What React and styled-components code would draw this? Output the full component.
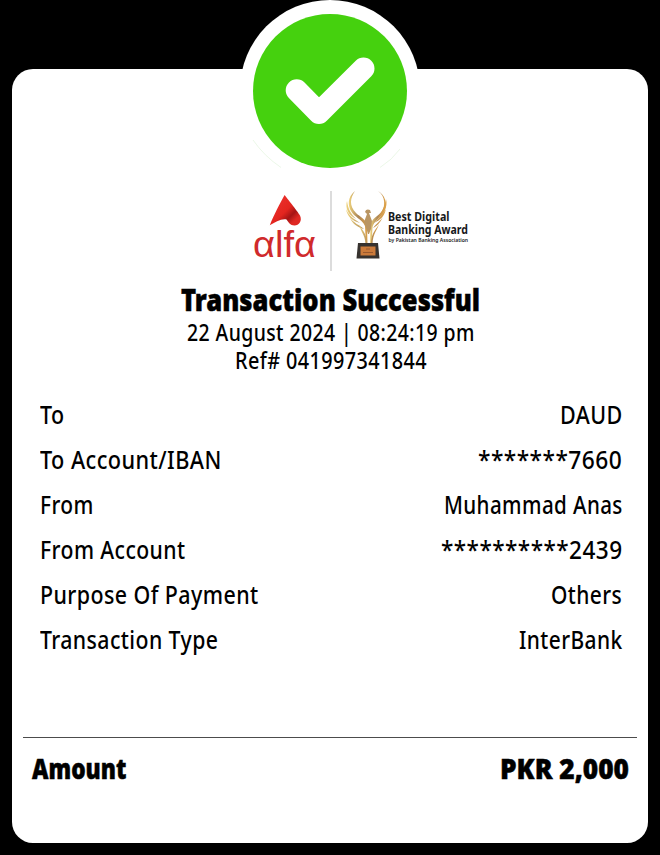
import React, { useLayoutEffect, useRef, useState } from 'react';
import styled, { createGlobalStyle } from 'styled-components';

const GlobalStyle = createGlobalStyle`
  * { box-sizing: border-box; }
  body {
    margin: 0;
    background: #000;
    color: #000;
    font-family: "Noto Sans", "Open Sans", sans-serif;
  }
`;

const Page = styled.main`
  width: 660px;
  height: 855px;
  padding: 69px 12px 12px;
  background: #000;
`;

const Card = styled.article`
  display: flex;
  flex-direction: column;
  height: 774px;
  padding: 0 11px;
  border-radius: 21px;
  background: #fff;
`;

const Badge = styled.svg`
  display: block;
  flex: none;
  align-self: center;
  width: 184px;
  height: 184px;
  margin-top: -69px;
`;

const Brands = styled.div`
  display: flex;
  align-self: center;
  width: 226px;
  height: 80px;
  margin: 7px 0 0 72px;
`;

const AlfaLogo = styled.svg`
  flex: none;
  width: 77px;
  height: 80px;
`;

const BrandRule = styled.div`
  flex: none;
  width: 2px;
  height: 80px;
  background: #dcdcdc;
`;

const AwardLogo = styled.svg`
  flex: none;
  width: 147px;
  height: 80px;
`;

const Heading = styled.header`
  display: flex;
  flex-direction: column;
  align-items: center;
  margin: 10px 0 0 1px;
`;

const Details = styled.dl`
  display: flex;
  flex-direction: column;
  margin: 17px 0 0;
  padding: 0 15px 0 17px;
`;

const Row = styled.div`
  display: flex;
  justify-content: space-between;
  align-items: center;
  height: 45px;
`;

const Total = styled.footer`
  display: flex;
  justify-content: space-between;
  align-items: center;
  height: 62px;
  margin-top: 76px;
  padding: 0 8px 0 9px;
  border-top: 1px solid #4c4c4c;
`;

const Line = styled.span`
  display: block;
  width: ${(p) => p.$width}px;
  height: ${(p) => p.$line}px;
  font-size: ${(p) => p.$size}px;
  font-weight: ${(p) => p.$weight};
  line-height: ${(p) => p.$line}px;
  letter-spacing: ${(p) => p.$tracking}px;
  -webkit-text-stroke: ${(p) => (p.$weight > 800 ? '0.5px #000' : '0')};
  white-space: nowrap;
`;

const Glyphs = styled.span`
  display: inline-block;
  transform-origin: left center;
`;

/* Condenses a line of text to the given width. */
function Condensed({ width, size = 25.5, line = 32, weight = 500, tracking = 0.5, children }) {
  const ref = useRef(null);
  const [scale, setScale] = useState(1);
  useLayoutEffect(() => {
    setScale(width / (ref.current.offsetWidth - tracking));
  }, [width, tracking]);
  return (
    <Line $width={width} $size={size} $line={line} $weight={weight} $tracking={tracking}>
      <Glyphs ref={ref} style={{ transform: `scaleX(${scale})` }}>{children}</Glyphs>
    </Line>
  );
}

const rows = [
  ['To', 24, 'DAUD', 62],
  ['To Account/IBAN', 181, '*******7660', 144],
  ['From', 53, 'Muhammad Anas', 178],
  ['From Account', 145, '**********2439', 181],
  ['Purpose Of Payment', 218, 'Others', 71],
  ['Transaction Type', 178, 'InterBank', 103],
];

function SuccessBadge() {
  return (
    <Badge viewBox="238 0 184 184" aria-label="Success">
      <circle cx="330" cy="90" r="90" fill="#fff" />
      <path d="M253 140Q264 156 281 167.500M380 167.500Q392 160 400 149" fill="none" stroke="#e3f3dc" strokeWidth=".7" />
      <circle cx="330" cy="91" r="77" fill="#45d10e" />
      <path d="M296.700 90.300 319 112.900 363.500 68.500" fill="none" stroke="#fff" strokeWidth="22" strokeLinecap="round" strokeLinejoin="round" />
    </Badge>
  );
}

function Alfa() {
  return (
    <AlfaLogo viewBox="253 191 77 80">
      <defs>
        <linearGradient id="leaf" x1="0" y1="0" x2="1" y2="1">
          <stop offset=".25" stopColor="#e92d29" />
          <stop offset=".52" stopColor="#e3251f" />
          <stop offset=".68" stopColor="#a51415" />
          <stop offset=".82" stopColor="#df2823" />
        </linearGradient>
      </defs>
      <path d="M284.600 195C286 197 297.500 211 300 215.500C302.500 221 299 225.500 294.500 225.500C290 225.500 288.500 222 286.500 219.500C281 218.500 275 222.500 269.800 225.200C273.500 216 280.500 202 284.600 195Z" fill="url(#leaf)" />
      <text x="253" y="257" textLength="63" lengthAdjust="spacingAndGlyphs" fontFamily="Liberation Sans, sans-serif" fontSize="37.500" fill="#d02a2c">αlfα</text>
    </AlfaLogo>
  );
}

function Award() {
  return (
    <AwardLogo viewBox="332 191 147 80">
      <defs>
        <linearGradient id="gold" x1="0" y1="0" x2="1" y2="0">
          <stop offset="0" stopColor="#f0d47c" />
          <stop offset=".5" stopColor="#a98455" />
          <stop offset="1" stopColor="#dfa247" />
        </linearGradient>
      </defs>
      <g fill="url(#gold)">
        <path d="M355 191C347 197 348 206 351 211C354 217 362 219 365 226L366 244H367.500L367 225C365 218 360 217 356 213C349 206 350 198 355 191Z" />
        <path d="M378 191C386 196 385 207 382 211C378 217 371 218 370.500 226L370 244H371.500L372.500 227C374 221 380 218 384 212C388 203 385 195 378 191Z" />
        <path d="M347 201C345 208 348 215 356 219C351 214 348 209 347 201ZM346 209C347 216 352 221 360 223C354 219 349 216 346 209ZM350 218C352 223 357 227 364 229C359 225 354 223 350 218ZM386 199C388 207 384 214 377 219C383 210 385 206 386 199ZM386 209C384 217 380 220 374 223C380 217 383 214 386 209ZM383 217C380 223 377 226 373 228C377 223 380 221 383 217Z" />
        <path d="M365 212Q366 208.500 370 210L371 213 369 213 372 221 371 229 369 234H368L366.500 229 364 222 367 214Z" fill="#b99562" />
        <path d="M359 224C361 233 365 234 365.500 244H367C367 232 361 230 359 224ZM379 224C377 231 373 233 372.500 244H371C371 232 377 229 379 224Z" />
      </g>
      <path d="M358 243H378L379.500 258.500H356.500Z" fill="#37322f" />
      <path d="M360.500 246.500H375.500V255.500H360.500Z" fill="#cc7b3b" />
      <path d="M363 252.500H373M366 249H370" stroke="#8d512b" strokeWidth=".8" />
      <g fontFamily="Noto Sans, sans-serif" fill="#17191b">
        <text x="388" y="220.500" textLength="61.500" lengthAdjust="spacingAndGlyphs" fontSize="12.500" fontWeight="700">Best Digital</text>
        <text x="388" y="234.300" textLength="80" lengthAdjust="spacingAndGlyphs" fontSize="12.500" fontWeight="700">Banking Award</text>
        <text x="388.500" y="242.200" textLength="79.500" lengthAdjust="spacingAndGlyphs" fontSize="5.800" fontWeight="600">by Pakistan Banking Association</text>
      </g>
    </AwardLogo>
  );
}

export default function App() {
  return (
    <>
      <GlobalStyle />
      <Page>
        <Card>
          <SuccessBadge />
          <Brands>
            <Alfa />
            <BrandRule />
            <Award />
          </Brands>
          <Heading>
            <Condensed width={299} size={29.5} line={37} weight={900} tracking={0}>Transaction Successful</Condensed>
            <Condensed width={287} size={24} line={28}>22 August 2024 | 08:24:19 pm</Condensed>
            <Condensed width={192} size={24} line={28}>Ref# 041997341844</Condensed>
          </Heading>
          <Details>
            {rows.map(([label, labelWidth, value, valueWidth]) => (
              <Row key={label}>
                <Condensed width={labelWidth}>{label}</Condensed>
                <Condensed width={valueWidth}>{value}</Condensed>
              </Row>
            ))}
          </Details>
          <Total>
            <Condensed width={94} size={27.5} weight={900} tracking={0}>Amount</Condensed>
            <Condensed width={129} size={27.5} weight={900} tracking={0}>PKR 2,000</Condensed>
          </Total>
        </Card>
      </Page>
    </>
  );
}
